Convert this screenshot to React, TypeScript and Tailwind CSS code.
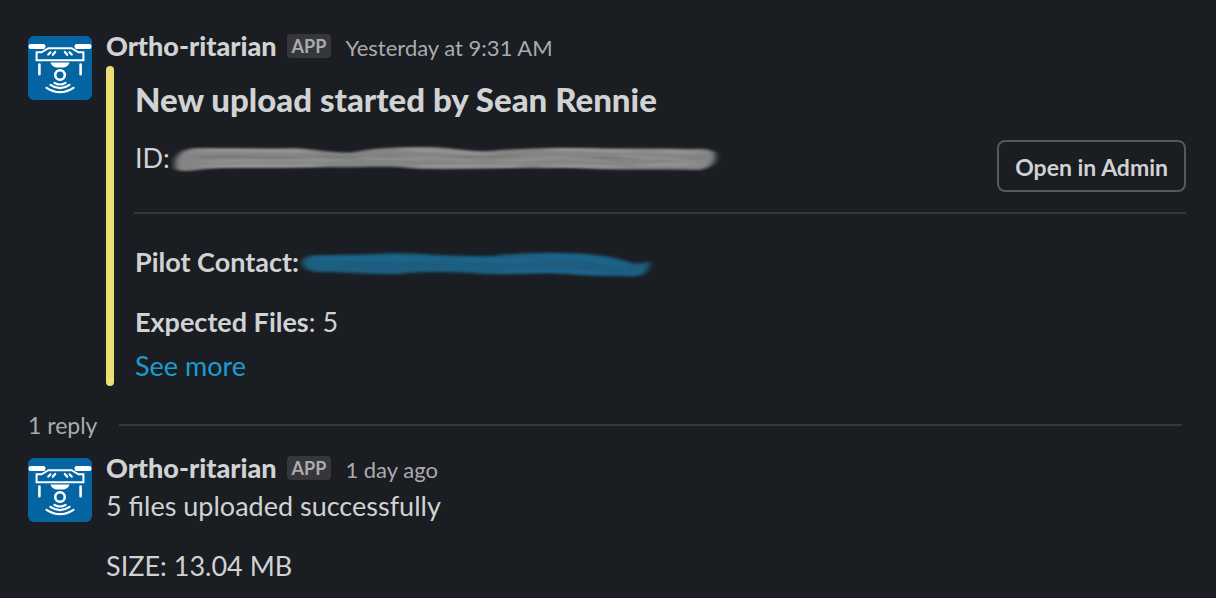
import type { ReactNode } from "react";

function DroneAvatar() {
  return (
    <svg
      viewBox="0 0 64 64"
      className="mt-1.5 h-16 w-16 shrink-0 rounded-md"
      role="img"
      aria-label="Ortho-ritarian"
    >
      <rect width="64" height="64" fill="#0565a3" />
      <g fill="#fff">
        <rect x="0.5" y="8" width="17" height="5" rx="2.2" />
        <rect x="46.5" y="8" width="17" height="5" rx="2.2" />
        <path d="M22.5 26.5h19c-0.6 3-4 5-7 5h-5c-3 0-6.4-2-7-5z" />
      </g>
      <g fill="none" stroke="#fff" strokeLinecap="round" strokeLinejoin="round">
        <path d="M8.6 24.3V16.3H13.5L20.5 12.2H43.5L50.5 16.3H55.4V24.3Z" strokeWidth="2" strokeLinejoin="miter" />
        <path d="M20.3 18.6L22.5 16.3M24.8 18.8L27.2 16M43.7 18.6L41.5 16.3M39.2 18.8L36.8 16" strokeWidth="2.2" />
        <path d="M11.4 28.5V38.3M52.6 28.5V38.3" strokeWidth="2.6" />
        <circle cx="32" cy="39" r="4.8" strokeWidth="2.6" />
        <path d="M26.5 47Q32 50 37.5 47" strokeWidth="2.2" />
        <path d="M22.5 48.8Q32 55.5 41.5 48.8" strokeWidth="2.2" />
        <path d="M18.5 51.8Q32 60.5 45.5 51.8" strokeWidth="2.2" />
      </g>
    </svg>
  );
}

function GreySmudge() {
  return (
    <svg viewBox="0 0 552 36" className="h-9 w-[552px] shrink-0" aria-hidden="true">
      <defs>
        <filter id="grey-edge" x="-5%" y="-30%" width="110%" height="160%">
          <feGaussianBlur stdDeviation="3 1.3" />
        </filter>
        <filter id="grey-streak" x="-10%" y="-200%" width="120%" height="500%">
          <feGaussianBlur stdDeviation="8 1" />
        </filter>
      </defs>
      <path
        filter="url(#grey-edge)"
        fill="#858585"
        d="M5 20Q10 9 24 8C60 8 100 9 125 8C150 10 170 14 185 12C210 7 235 7 262 7C285 8 300 12 320 11C350 8 385 8 410 8C450 9 490 8 520 9Q544 8 545 14Q547 26 530 30C500 29 460 30 430 29C390 27 360 28 330 28C295 29 265 30 240 28C215 25 190 28 160 27C120 28 80 28 50 28C30 28 12 35 5 28Z"
      />
      <g fill="none" filter="url(#grey-streak)" strokeWidth="2">
        <path stroke="#9c9c9c" d="M30 11C60 9 100 12 140 11M34 27C80 24 120 27 150 25M235 10C270 9 295 14 320 15M245 27C290 24 330 28 350 26M380 10C410 9 440 12 470 11M370 27C400 24 420 27 450 27M480 12C505 10 515 13 526 13M470 26C500 22 515 26 525 24" />
        <path stroke="#747474" d="M25 18C60 13 95 21 130 17M150 16C180 19 205 14 235 18M260 20C295 13 320 19 350 15M370 17C405 22 435 15 470 19M490 21C510 16 520 20 530 18" />
        <path stroke="#959595" d="M35 22C85 19 120 21 170 20M190 17C225 22 255 15 305 21M330 23C365 17 395 16 430 21M450 16C485 20 510 17 525 22" />
      </g>
    </svg>
  );
}

function BlueSmudge() {
  return (
    <svg viewBox="0 0 360 36" className="h-9 w-[360px] shrink-0" aria-hidden="true">
      <defs>
        <filter id="blue-edge" x="-5%" y="-30%" width="110%" height="160%">
          <feGaussianBlur stdDeviation="3.2 1.8" />
        </filter>
        <filter id="blue-streak" x="-10%" y="-200%" width="120%" height="500%">
          <feGaussianBlur stdDeviation="8 1.4" />
        </filter>
      </defs>
      <path
        filter="url(#blue-edge)"
        fill="#1b5f82"
        d="M3 18Q5 11 20 11C50 11 75 10 100 9C130 10 165 13 195 12C215 9 240 8 265 9C290 9 315 12 332 19Q342 21 350 17Q353 20 346 29Q340 34 325 32C295 33 280 30 255 29C230 29 215 31 185 30C155 28 130 27 100 30C75 31 45 28 20 28Q4 27 3 18Z"
      />
      <g fill="none" filter="url(#blue-streak)" strokeWidth="2">
        <path stroke="#1c6c97" d="M20 15C65 13 100 15 140 15M160 16C185 14 205 19 235 16M205 28C240 24 270 29 300 29M245 12C280 12 305 16 325 21" />
        <path stroke="#205a76" d="M35 22C75 17 110 24 150 20M170 22C205 17 245 23 280 19M270 25C300 20 320 26 340 25" />
      </g>
    </svg>
  );
}

function Message({ time, children }: { time: string; children: ReactNode }) {
  return (
    <article className="flex gap-3.5">
      <DroneAvatar />
      <div className="min-w-0 flex-1">
        <header className="flex h-8 items-center">
          <span className="text-[27px] leading-8 font-black">Ortho-ritarian</span>
          <span className="ml-2.5 rounded bg-[#35373b] px-[5px] text-[18px] leading-6 font-bold text-[#ababad]">
            APP
          </span>
          <time className="ml-3.5 pt-1 text-[22px] leading-8 text-[#ababad]">{time}</time>
        </header>
        {children}
      </div>
    </article>
  );
}

export default function App() {
  return (
    <main className="min-h-screen bg-[#1a1d21] pt-[30px] pr-[30px] pb-2 pl-7 font-['Lato','Open_Sans',sans-serif] text-[27px] leading-[44px] text-[#d1d2d3]">
      <Message time="Yesterday at 9:31 AM">
        <div className="mt-1 flex gap-5">
          <div className="w-2 shrink-0 rounded-full bg-[#ece074]" />
          <div className="min-w-0 flex-1 pt-3">
            <h1 className="pl-px text-[33px] leading-[42px] font-black">New upload started by Sean Rennie</h1>
            <div className="mt-4 flex items-start justify-between gap-4 pl-px">
              <p className="flex items-center">
                ID:
                <GreySmudge />
              </p>
              <button
                type="button"
                className="mt-1 h-[52px] shrink-0 rounded-lg border-2 border-[#56585b] px-4 pt-0.5 text-[23px] leading-8 font-bold"
              >
                Open in Admin
              </button>
            </div>
            <hr className="mt-5 border-t-2 border-[#35373b]" />
            <p className="mt-[26px] flex items-center pl-px">
              <span className="font-bold">Pilot Contact:</span>
              <BlueSmudge />
            </p>
            <p className="mt-4 pl-px">
              <span className="font-bold">Expected Files</span>: 5
            </p>
            <a href="#more" className="-mb-0.5 block pl-px text-[#1d9bd1]">
              See more
            </a>
          </div>
        </div>
      </Message>

      <div className="mt-[22px] mb-2.5 flex items-center gap-[22px] pr-1">
        <span className="text-[23px] leading-[34px] text-[#ababad]">1 reply</span>
        <hr className="flex-1 border-t-2 border-[#35373b]" />
      </div>

      <Message time="1 day ago">
        <p>5 files uploaded successfully</p>
        <p className="mt-4">SIZE: 13.04 MB</p>
      </Message>
    </main>
  );
}
